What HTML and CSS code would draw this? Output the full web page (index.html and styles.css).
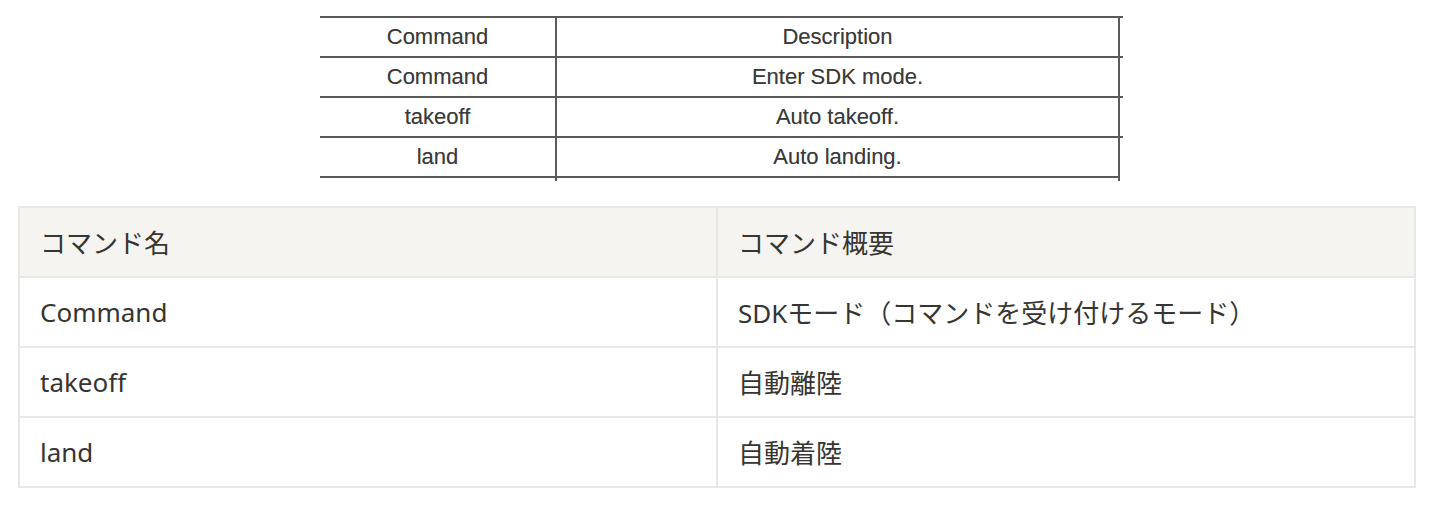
FILE: index.html
```html
<!DOCTYPE html>
<html lang="ja">
<head>
<meta charset="utf-8">
<title>Commands</title>
<link rel="stylesheet" href="styles.css">
</head>
<body>
<div class="page">
  <div class="figure">
    <div class="frow">
      <div class="fcell c1">Command</div>
      <div class="fcell c2">Description</div>
    </div>
    <div class="frow">
      <div class="fcell c1">Command</div>
      <div class="fcell c2">Enter SDK mode.</div>
    </div>
    <div class="frow">
      <div class="fcell c1">takeoff</div>
      <div class="fcell c2">Auto takeoff.</div>
    </div>
    <div class="frow">
      <div class="fcell c1">land</div>
      <div class="fcell c2">Auto landing.</div>
    </div>
    <div class="frow ftail">
      <div class="fcell c1"></div>
      <div class="fcell c2"></div>
    </div>
  </div>

  <table class="cmd">
    <thead>
      <tr><th>コマンド名</th><th>コマンド概要</th></tr>
    </thead>
    <tbody>
      <tr><td>Command</td><td>SDKモード（コマンドを受け付けるモード）</td></tr>
      <tr><td>takeoff</td><td>自動離陸</td></tr>
      <tr><td>land</td><td>自動着陸</td></tr>
    </tbody>
  </table>
</div>
</body>
</html>
```
FILE: styles.css
```css
html, body {
  margin: 0;
  padding: 0;
  background: #ffffff;
}

.page {
  padding: 16px 0 0 18px;
}

.figure {
  width: 803px;
  margin-left: 302px;
  font-family: "Liberation Sans", Arial, sans-serif;
  font-size: 22px;
  color: #3a3a3a;
}

.frow {
  display: grid;
  grid-template-columns: 237px 563px 3px;
  height: 38px;
  border-top: 2px solid #5a5a5a;
}

.frow.ftail {
  height: 3px;
  border-top: 2px solid #5a5a5a;
  grid-template-columns: 237px 563px;
  margin-right: 3px;
}

.fcell {
  display: flex;
  align-items: center;
  justify-content: center;
  text-shadow: 0 0 0.6px rgba(0,0,0,0.35);
}

.fcell.c1 {
  border-right: 2px solid #5a5a5a;
}

.fcell.c2 {
  border-right: 2px solid #5a5a5a;
}

.cmd {
  margin-top: 25px;
  width: 1398px;
  border-collapse: collapse;
  table-layout: fixed;
  font-family: "Noto Sans", "Noto Sans CJK JP", sans-serif;
  font-size: 26px;
  color: #363531;
}

.cmd th,
.cmd td {
  border: 2px solid #e7e7e6;
  height: 70px;
  padding: 0 20px;
  text-align: left;
  vertical-align: middle;
  font-weight: 400;
  box-sizing: border-box;
}

.cmd th {
  background: #f5f4f1;
}
```
